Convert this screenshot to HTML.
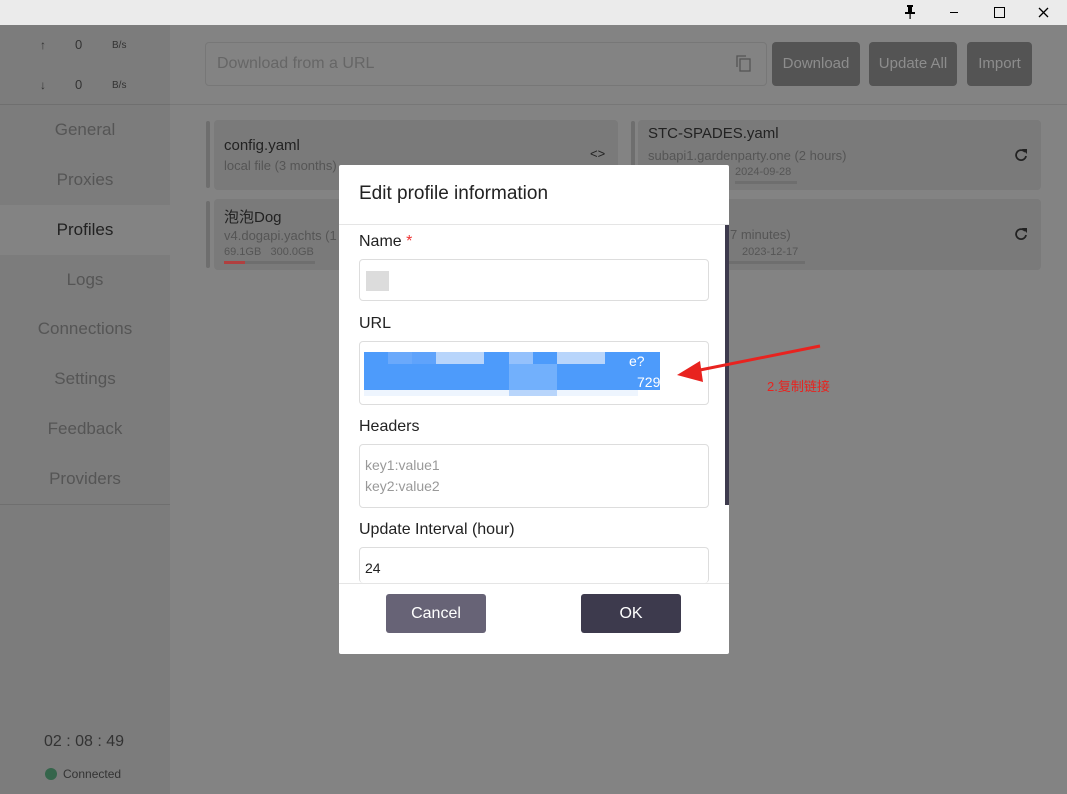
<!DOCTYPE html><html><head><meta charset="utf-8"><style>
*{box-sizing:border-box;margin:0;padding:0}
body{width:1067px;height:794px;position:relative;overflow:hidden;font-family:"Liberation Sans","Noto Sans CJK SC",sans-serif;background:#838383}
.a{position:absolute}
.side{left:0;top:25px;width:170px;height:769px;background:#7c7c7c}
.nav{left:0;width:170px;text-align:center;font-size:17px;color:#555}
.card{background:#7a7a7a;border-radius:4px}
.bar{width:4px;background:#6e6e6e;border-radius:2px}
.btn{background:#545454;color:#8d8d8d;font-size:15px;border-radius:4px;text-align:center;line-height:44px;top:42px;height:44px}
.lbl{left:20px;font-size:16px;color:#222}
.inp{left:20px;width:350px;border:1px solid #ddd;border-radius:4px;background:#fff}
</style></head><body>
<div class="a" style="left:0;top:0;width:1067px;height:25px;background:#ebebeb"></div>
<svg class="a" style="left:904px;top:5px" width="12" height="15"><rect x="3" y="0" width="6" height="2" fill="#000"/><rect x="4" y="2" width="4" height="5" fill="#000"/><rect x="1" y="7" width="10" height="2" fill="#000"/><rect x="5.5" y="9" width="1.2" height="5" fill="#000"/></svg>
<div class="a" style="left:950px;top:12px;width:8px;height:1px;background:#000"></div>
<div class="a" style="left:994px;top:7px;width:11px;height:11px;border:1.5px solid #000"></div>
<svg class="a" style="left:1038px;top:7px" width="11" height="11"><path d="M1 1L10 10M10 1L1 10" stroke="#000" stroke-width="1.3"/></svg>
<div class="a side"></div>
<div class="a" style="left:0;top:104px;width:170px;height:1px;background:#6f6f6f"></div>
<div class="a" style="left:40px;top:38px;font-size:12px;color:#333">↑</div>
<div class="a" style="left:75px;top:37px;font-size:13px;color:#333">0</div>
<div class="a" style="left:112px;top:40px;font-size:10px;color:#333">B/s</div>
<div class="a" style="left:40px;top:78px;font-size:12px;color:#333">↓</div>
<div class="a" style="left:75px;top:77px;font-size:13px;color:#333">0</div>
<div class="a" style="left:112px;top:80px;font-size:10px;color:#333">B/s</div>
<div class="a" style="left:0;top:205px;width:170px;height:50px;background:#838383"></div>
<div class="a nav" style="top:120px">General</div>
<div class="a nav" style="top:170px">Proxies</div>
<div class="a nav" style="top:220px;color:#222">Profiles</div>
<div class="a nav" style="top:270px">Logs</div>
<div class="a nav" style="top:319px">Connections</div>
<div class="a nav" style="top:369px">Settings</div>
<div class="a nav" style="top:419px">Feedback</div>
<div class="a nav" style="top:469px">Providers</div>
<div class="a" style="left:0;top:504px;width:170px;height:1px;background:#6f6f6f"></div>
<div class="a" style="left:44px;top:733px;font-size:16px;color:#333">02 : 08 : 49</div>
<div class="a" style="left:45px;top:768px;width:12px;height:12px;border-radius:50%;background:#35654b"></div>
<div class="a" style="left:63px;top:767px;font-size:12px;color:#333">Connected</div>
<div class="a" style="left:205px;top:42px;width:562px;height:44px;border:1px solid #777;border-radius:4px"></div>
<div class="a" style="left:217px;top:55px;font-size:16px;color:#666">Download from a URL</div>
<svg class="a" style="left:736px;top:55px" width="16" height="18"><path d="M1 12V1h9" fill="none" stroke="#555" stroke-width="1.3"/><rect x="4" y="4" width="10" height="12" fill="none" stroke="#555" stroke-width="1.3"/></svg>
<div class="a btn" style="left:772px;width:88px">Download</div>
<div class="a btn" style="left:869px;width:88px">Update All</div>
<div class="a btn" style="left:967px;width:65px">Import</div>
<div class="a" style="left:170px;top:104px;width:897px;height:1px;background:#777"></div>
<div class="a bar" style="left:206px;top:121px;height:67px"></div>
<div class="a card" style="left:214px;top:120px;width:404px;height:70px"></div>
<div class="a" style="left:224px;top:137px;font-size:15px;color:#222">config.yaml</div>
<div class="a" style="left:224px;top:158px;font-size:13px;color:#555">local file (3 months)</div>
<div class="a" style="left:590px;top:146px;font-size:13px;color:#222">&lt;&gt;</div>
<div class="a bar" style="left:206px;top:201px;height:67px"></div>
<div class="a card" style="left:214px;top:199px;width:404px;height:71px"></div>
<div class="a" style="left:224px;top:206px;font-size:15px;color:#222">泡泡Dog</div>
<div class="a" style="left:224px;top:228px;font-size:13px;color:#555">v4.dogapi.yachts (1</div>
<div class="a" style="left:224px;top:246px;font-size:11px;color:#555">69.1GB &nbsp; 300.0GB</div>
<div class="a" style="left:224px;top:261px;width:91px;height:3px;background:#6e6e6e"></div>
<div class="a" style="left:224px;top:261px;width:21px;height:3px;background:#b04040"></div>
<div class="a bar" style="left:631px;top:121px;height:67px"></div>
<div class="a card" style="left:638px;top:120px;width:403px;height:70px"></div>
<div class="a" style="left:648px;top:125px;font-size:15px;color:#222">STC-SPADES.yaml</div>
<div class="a" style="left:648px;top:148px;font-size:13px;color:#555">subapi1.gardenparty.one (2 hours)</div>
<div class="a" style="left:735px;top:166px;font-size:11px;color:#555">2024-09-28</div>
<div class="a" style="left:735px;top:181px;width:62px;height:3px;background:#6e6e6e"></div>
<svg class="a" style="left:1014px;top:148px" width="14" height="14"><path d="M11 4A5 5 0 1 0 12 8" fill="none" stroke="#222" stroke-width="1.8"/><path d="M8 1h5v5z" fill="#222"/></svg>
<div class="a bar" style="left:631px;top:201px;height:67px"></div>
<div class="a card" style="left:638px;top:199px;width:403px;height:71px"></div>
<div class="a" style="left:730px;top:227px;font-size:13px;color:#555">7 minutes)</div>
<div class="a" style="left:742px;top:246px;font-size:11px;color:#555">2023-12-17</div>
<div class="a" style="left:729px;top:261px;width:76px;height:3px;background:#6e6e6e"></div>
<svg class="a" style="left:1014px;top:227px" width="14" height="14"><path d="M11 4A5 5 0 1 0 12 8" fill="none" stroke="#222" stroke-width="1.8"/><path d="M8 1h5v5z" fill="#222"/></svg>

<div class="a" style="left:339px;top:165px;width:390px;height:489px;background:#fff;border-radius:2px">
<div class="a" style="left:20px;top:18px;font-size:19px;color:#222">Edit profile information</div>
<div class="a" style="left:0;top:59px;width:390px;height:1px;background:#e5e5e5"></div>
<div class="a" style="left:386px;top:60px;width:4px;height:280px;background:#3d3a4d"></div>
<div class="a lbl" style="top:68px">Name <span style="color:#e33">*</span></div>
<div class="a inp" style="top:94px;height:42px"></div>
<div class="a" style="left:27px;top:106px;width:23px;height:20px;background:#dcdcdc"></div>
<div class="a lbl" style="top:150px">URL</div>
<div class="a inp" style="top:176px;height:64px"></div>
<div class="a" style="left:25px;top:187px;width:296px;height:38px;background:#4d9bfb"></div>
<div class="a" style="left:49px;top:187px;width:24px;height:12px;background:#6aa9fb"></div>
<div class="a" style="left:73px;top:187px;width:24px;height:12px;background:#5fa3fb"></div>
<div class="a" style="left:97px;top:187px;width:48px;height:12px;background:#b8d5fb"></div>
<div class="a" style="left:170px;top:187px;width:24px;height:12px;background:#94c1fc"></div>
<div class="a" style="left:218px;top:187px;width:48px;height:12px;background:#b8d5fb"></div>
<div class="a" style="left:170px;top:199px;width:48px;height:26px;background:#72b0fc"></div>
<div class="a" style="left:25px;top:225px;width:274px;height:6px;background:#eef5fe"></div>
<div class="a" style="left:170px;top:225px;width:48px;height:6px;background:#b8d5fb"></div>
<div class="a" style="left:290px;top:188px;font-size:14px;color:#fff">e?</div>
<div class="a" style="left:298px;top:209px;font-size:14px;color:#fff">729</div>
<div class="a lbl" style="top:253px">Headers</div>
<div class="a inp" style="top:279px;height:64px"></div>
<div class="a" style="left:26px;top:290px;font-size:14px;color:#999;line-height:21px">key1:value1<br>key2:value2</div>
<div class="a lbl" style="top:356px">Update Interval (hour)</div>
<div class="a inp" style="top:382px;height:36px;border-bottom:none"></div>
<div class="a" style="left:26px;top:395px;font-size:14px;color:#222">24</div>
<div class="a" style="left:0;top:418px;width:390px;height:1px;background:#e5e5e5"></div>
<div class="a" style="left:47px;top:429px;width:100px;height:39px;background:#676376;border-radius:3px;color:#fff;text-align:center;line-height:39px;font-size:16px">Cancel</div>
<div class="a" style="left:242px;top:429px;width:100px;height:39px;background:#3d3a4d;border-radius:3px;color:#fff;text-align:center;line-height:39px;font-size:16px">OK</div>
</div>
<svg class="a" style="left:0;top:0" width="1067" height="794"><line x1="820" y1="346" x2="695" y2="371" stroke="#e8231f" stroke-width="3"/><polygon points="677,375 700,361 703,382" fill="#e8231f"/></svg>
<div class="a" style="left:767px;top:376px;font-size:13px;color:#e8231f">2.复制链接</div>
</body></html>
